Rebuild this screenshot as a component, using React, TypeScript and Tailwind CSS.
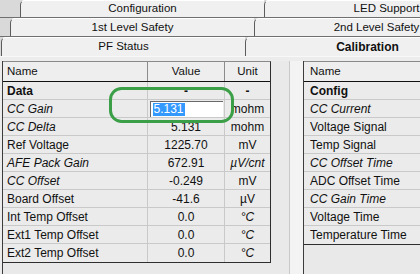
const ui = { fontFamily: '"Liberation Sans", Arial, sans-serif' };

type Row = { name: string; value?: string; unit?: string; bold?: boolean; italic?: boolean; edit?: boolean };

const dataRows: Row[] = [
  { name: 'Data', value: '-', unit: '-', bold: true },
  { name: 'CC Gain', unit: 'mohm', italic: true, edit: true },
  { name: 'CC Delta', value: '5.131', unit: 'mohm', italic: true },
  { name: 'Ref Voltage', value: '1225.70', unit: 'mV' },
  { name: 'AFE Pack Gain', value: '672.91', unit: 'µV/cnt', italic: true },
  { name: 'CC Offset', value: '-0.249', unit: 'mV', italic: true },
  { name: 'Board Offset', value: '-41.6', unit: 'µV' },
  { name: 'Int Temp Offset', value: '0.0', unit: '°C' },
  { name: 'Ext1 Temp Offset', value: '0.0', unit: '°C' },
  { name: 'Ext2 Temp Offset', value: '0.0', unit: '°C' },
];

const configRows: Row[] = [
  { name: 'Config', bold: true },
  { name: 'CC Current', italic: true },
  { name: 'Voltage Signal' },
  { name: 'Temp Signal' },
  { name: 'CC Offset Time', italic: true },
  { name: 'ADC Offset Time' },
  { name: 'CC Gain Time', italic: true },
  { name: 'Voltage Time' },
  { name: 'Temperature Time' },
];

function TabRow({ offset, height, left, right, active }: { offset: string; height: string; left: string; right: string; active?: boolean }) {
  return (
    <div className={`flex ${height} ${active ? 'border-b border-[#f8f8f8]' : 'border-b border-[#6f6f6f]'} bg-[#d9d9d9]`}>
      <div className={`${offset} shrink-0`} />
      <div className="w-[244px] shrink-0 flex items-center justify-center bg-[#f0f0f0] border-l border-t border-l-[#5c5c5c] border-t-white rounded-tl-[5px] text-[11.5px] text-[#111]">
        {left}
      </div>
      <div className={`w-[244px] shrink-0 flex items-center justify-center bg-[#f0f0f0] border-l border-t border-l-[#5c5c5c] border-t-white rounded-tl-[5px] text-[#111] ${active ? 'font-bold text-[12px]' : 'text-[11.5px]'}`}>
        {right}
      </div>
    </div>
  );
}

export default function App() {
  return (
    <div className="relative w-[420px] h-[274px] overflow-hidden bg-[#ececec]" style={ui}>
      <TabRow offset="w-[20px]" height="h-[18px]" left="Configuration" right="LED Support" />
      <TabRow offset="w-[10px]" height="h-[19px]" left="1st Level Safety" right="2nd Level Safety" />
      <TabRow offset="w-[1px]" height="h-[20px]" left="PF Status" right="Calibration" active />

      <div className="flex h-[217px] pt-[4px] pl-[2px]">
        {/* left panel */}
        <div className="w-[288px] shrink-0 border-l border-[#3c3c3c] border-r border-r-[#c8c8c8] bg-[#e9e9e9]">
          <div className="w-[268px] border-t border-r border-b border-[#2e2e2e] border-t-[#8a8a8a]">
            <div className="flex h-[20px] border-b border-[#111] bg-[#eeeeee] text-[11.5px] text-[#111]">
              <div className="w-[145px] flex items-center pl-[4px] border-r border-[#8c8c8c]">Name</div>
              <div className="w-[77px] flex items-center justify-center border-r border-[#8c8c8c]">Value</div>
              <div className="flex-1 flex items-center justify-center">Unit</div>
            </div>
            {dataRows.map((r, i) => (
              <div key={r.name} className={`flex h-[18px] text-[12px] text-[#111] bg-[#ebebeb] ${i < dataRows.length - 1 ? 'border-b border-[#c9c9c9]' : ''}`}>
                <div className={`w-[145px] flex items-center pl-[4px] border-r border-[#c9c9c9] ${r.bold ? 'font-bold' : ''} ${r.italic ? 'italic' : ''}`}>
                  {r.name}
                </div>
                <div className="w-[77px] flex items-center justify-center border-r border-[#c9c9c9]">
                  {r.edit ? (
                    <div className="w-[73px] h-[16px] flex items-center bg-white border-t border-l border-[#6a6a6a] pl-[2px]">
                      <span className="bg-[#3399ff] text-white px-[1px] leading-[13px]">5.131</span>
                    </div>
                  ) : (
                    <span className={r.bold ? 'font-bold' : ''}>{r.value}</span>
                  )}
                </div>
                <div className={`flex-1 flex items-center justify-center ${r.bold ? 'font-bold' : ''} ${r.unit === '°C' || r.unit === 'µV/cnt' ? 'italic' : ''}`}>
                  {r.unit}
                </div>
              </div>
            ))}
          </div>
        </div>

        {/* gap */}
        <div className="w-[13px] shrink-0 bg-[#f3f3f3]" />

        {/* right panel */}
        <div className="flex-1 border-l border-[#3c3c3c] bg-[#e9e9e9]">
          <div className="border-t border-b border-[#2e2e2e] border-t-[#8a8a8a]">
            <div className="flex h-[20px] items-center border-b border-[#111] bg-[#eeeeee] pl-[6px] text-[11.5px] text-[#111]">Name</div>
            {configRows.map((r, i) => (
              <div key={r.name} className={`flex h-[18px] items-center pl-[6px] text-[12px] text-[#111] bg-[#ebebeb] ${i < configRows.length - 1 ? 'border-b border-[#c9c9c9]' : ''} ${r.bold ? 'font-bold' : ''} ${r.italic ? 'italic' : ''}`}>
                {r.name}
              </div>
            ))}
          </div>
        </div>
      </div>

      {/* hand-drawn highlight */}
      <svg className="absolute left-[108px] top-[86px]" width="128" height="38" viewBox="0 0 128 38">
        <rect x="2.5" y="2.5" width="122" height="33" rx="11" fill="none" stroke="#3b9f47" strokeWidth="3" />
      </svg>
    </div>
  );
}
